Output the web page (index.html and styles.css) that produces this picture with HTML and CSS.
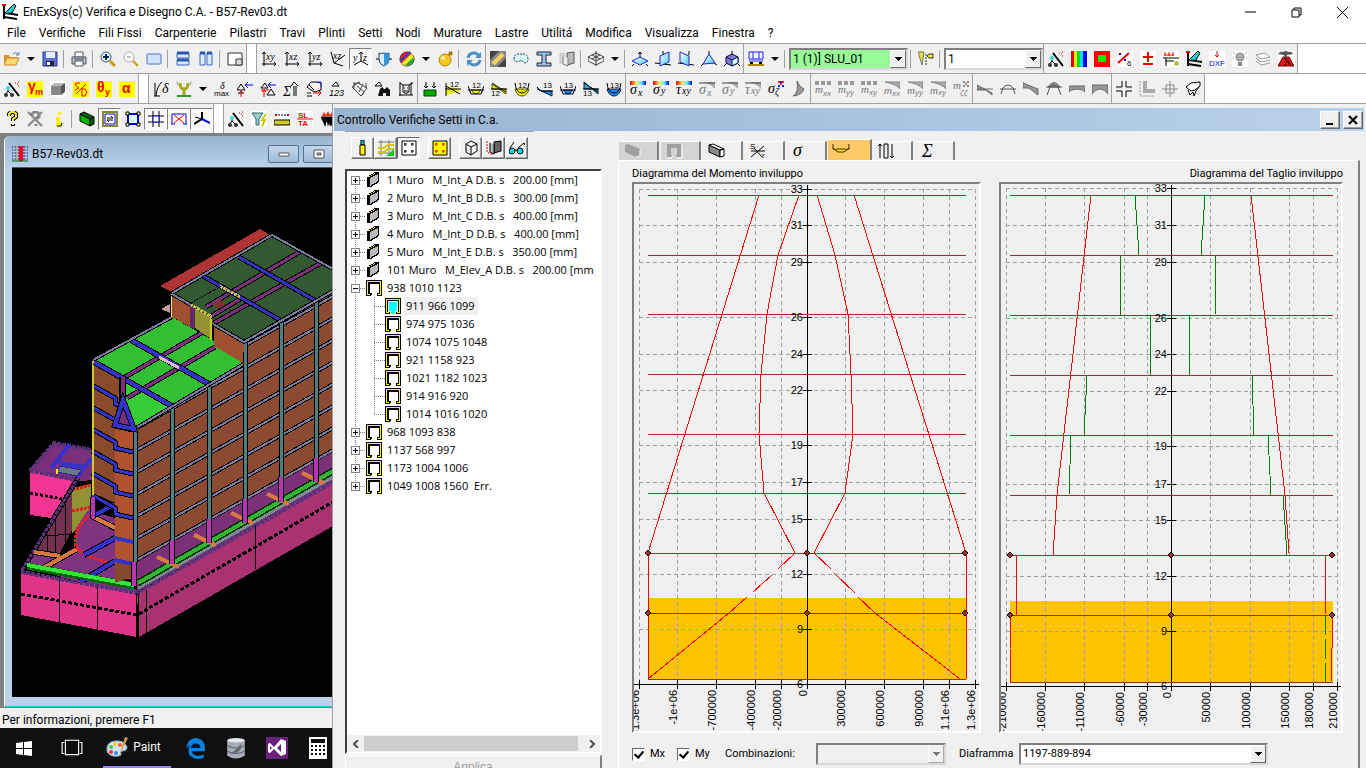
FILE: index.html
```html
<!DOCTYPE html>
<html lang="it">
<head>
    <meta charset="UTF-8">
    <meta name="viewport" content="width=device-width, initial-scale=1.0">
    <title>EnExSys(c) Verifica e Disegno C.A. - B57-Rev03.dt</title>
    <link rel="stylesheet" href="styles.css">
</head>
<body>
    <svg class="paints" aria-hidden="true">
        <defs>
            <linearGradient id="rainbow"><stop offset="0" stop-color="#e00"/><stop offset=".4" stop-color="#ee6"/><stop offset=".7" stop-color="#6ef"/><stop offset="1" stop-color="#00e"/></linearGradient>
            <linearGradient id="glass" x2="1" y2="1"><stop offset="0" stop-color="#fff"/><stop offset="1" stop-color="#4ce"/></linearGradient>
        </defs>
    </svg>
    <svg class="sprite" aria-hidden="true">
        <!-- file / view -->
        <symbol id="open" viewBox="0 0 16 16"><path d="M0 14V4h5l1 2h7v2" fill="#d99a2b"/><path d="M0 14L3 7h12l-3 7z" fill="#ffd876" stroke="#c88a20"/><path d="M9 3q3-3 5 0m1-2v3h-3" fill="none" stroke="#4a7ab0"/></symbol>
        <symbol id="save" viewBox="0 0 16 16"><path d="M1 1h14v14H1z" fill="#5b6fd6" stroke="#2b3a9a"/><path d="M4 1h9v6H4z" fill="#e8ecff"/><path d="M4 10h8v5H4z" fill="#223"/><path d="M5 11h3v3H5z" fill="#fff"/></symbol>
        <symbol id="print" viewBox="0 0 16 16"><path d="M4 1h8v5H4z" fill="#fff" stroke="#555"/><path d="M1 6h14v7H1z" fill="#b8bec8" stroke="#556"/><path d="M4 10h8v5H4z" fill="#fff" stroke="#555"/><path d="M3 8h10" stroke="#445"/></symbol>
        <symbol id="zoomin" viewBox="0 0 16 16"><path d="M10 10l5 5" stroke="#c90" stroke-width="3"/><circle cx="6" cy="6" r="5" fill="#e6f4ff" stroke="#357"/><path d="M3 6h6M6 3v6" stroke="#124" stroke-width="2"/></symbol>
        <symbol id="zoomout" viewBox="0 0 16 16"><path d="M10 10l5 5" stroke="#c90" stroke-width="2"/><circle cx="6" cy="6" r="5" fill="#fff" stroke="#aaa"/><path d="M4 6h4" stroke="#777"/></symbol>
        <symbol id="fit" viewBox="0 0 16 16"><rect x="1" y="3" width="14" height="10" rx="1" fill="#cfe2ff" stroke="#4a78c8"/></symbol>
        <symbol id="tileh" viewBox="0 0 16 16"><path d="M2 2h12v5H2zM2 9h12v5H2z" fill="#dceaff" stroke="#3a68b8"/><path d="M2 2h12M2 9h12" stroke="#2a58b0" stroke-width="3"/></symbol>
        <symbol id="tilev" viewBox="0 0 16 16"><path d="M2 2h5v12H2zM9 2h5v12H9z" fill="#dceaff" stroke="#3a68b8"/><path d="M2 2h5M9 2h5" stroke="#2a58b0" stroke-width="3"/></symbol>
        <symbol id="pip" viewBox="0 0 16 16"><path d="M1 2h14v12H1z" fill="#fff" stroke="#333"/><path d="M9 8h6v6H9z" fill="#ddd" stroke="#333"/></symbol>
        <symbol id="xy" viewBox="0 0 16 16"><path d="M3 15V1M1 3l2-2 2 2M1 13h14l-2-2m2 2l-2 2" class="ln"/><text x="5" y="9" class="ax">xy</text></symbol>
        <symbol id="xz" viewBox="0 0 16 16"><path d="M3 15V1M1 3l2-2 2 2M1 13h14l-2-2m2 2l-2 2" class="ln"/><text x="5" y="9" class="ax">xz</text></symbol>
        <symbol id="yz" viewBox="0 0 16 16"><path d="M3 15V1M1 3l2-2 2 2M1 13h14l-2-2m2 2l-2 2" class="ln"/><text x="5" y="9" class="ax">yz</text></symbol>
        <symbol id="xzr" viewBox="0 0 16 16"><path d="M1 1l3 11 9 3M4 12l11-8" class="ln"/><text x="3" y="8" class="ax">xz</text></symbol>
        <symbol id="iso" viewBox="0 0 16 16"><path d="M8 1v9l-7 4M8 10l7 4M6 3l2-2 2 2" class="ln"/><text x="0" y="10" class="ax">y</text><text x="10" y="10" class="ax">z</text></symbol>
        <symbol id="shield" viewBox="0 0 16 16"><path d="M0 8h16" stroke="#000"/><path d="M8 2q3 1 5 0v7q0 4-5 6-5-2-5-6V2q2 1 5 0z" fill="#def" stroke="#248"/><path d="M8 2q3 1 5 0v7q0 4-5 6z" fill="#39d"/></symbol>
        <symbol id="ball" viewBox="0 0 16 16"><circle cx="8" cy="8" r="7" fill="#e22" stroke="#711"/><path d="M2 13L13 2l2 6-7 7z" fill="#ee2"/><path d="M6 14l9-8-1 6-4 3z" fill="#2a4"/><path d="M1 10L11 1" stroke="#24c" stroke-width="2"/></symbol>
        <symbol id="bomb" viewBox="0 0 16 16"><path d="M10 6l5-5M12 1l3 3" stroke="#a60" stroke-width="2"/><circle cx="8" cy="9" r="6" fill="#f6c820" stroke="#b88a00"/><circle cx="6" cy="7" r="2" fill="#ffefa0"/></symbol>
        <symbol id="refresh" viewBox="0 0 16 16"><path d="M2 7q1-5 6-5 3 0 5 3M14 9q-1 5-6 5-3 0-5-3" fill="none" stroke="#4a90c8" stroke-width="3"/><path d="M15 1v6H9zM1 15V9h6z" fill="#4a90c8"/></symbol>
        <symbol id="brush" viewBox="0 0 16 16"><path d="M0 0h16v16H0z" fill="#888"/><path d="M0 0h9L0 9zM16 7v9H7z" fill="#444"/><path d="M3 13L13 3" stroke="#f7d060" stroke-width="4"/></symbol>
        <symbol id="lasso" viewBox="0 0 16 16"><path d="M1 8q0-5 5-5h5q4 1 4 5 0 4-4 4-1-3-4-2-6 2-6-2z" fill="#d8f8fa" stroke="#246" stroke-dasharray="2 1"/></symbol>
        <symbol id="beam" viewBox="0 0 16 16"><path d="M1 1h14v3h-5v8h5v3H1v-3h5V4H1z" fill="#9cc0ee" stroke="#223"/></symbol>
        <symbol id="stair" viewBox="0 0 16 16"><path d="M8 2l7-1v11l-7 2z" fill="#bbb" stroke="#555"/><path d="M1 3l4-1v9l-4 1z" fill="#ddd" stroke="#999" stroke-dasharray="1 1"/><path d="M4 5v8l5 2V7" fill="#eee" stroke="#777"/></symbol>
        <symbol id="slab" viewBox="0 0 16 16"><path d="M0 6l8-4 8 4-8 4zM0 6v4l8 4 8-4V6M4 4l8 4M12 4L4 8M8 0v15" class="ln thin"/></symbol>
        <symbol id="p1" viewBox="0 0 16 16"><path d="M8 1v6M6 3l2-2 2 2" class="ln"/><path d="M0 10l8-4 8 4-8 4z" fill="url(#glass)" stroke="#22c"/><path d="M0 15l2-2M16 15l-2-2" class="ln"/></symbol>
        <symbol id="p2" viewBox="0 0 16 16"><path d="M0 12l16 2M8 4V0" class="ln"/><path d="M5 5l9-4v10l-9 4z" fill="url(#glass)" stroke="#22c"/></symbol>
        <symbol id="p3" viewBox="0 0 16 16"><path d="M0 12l16 2M11 4V0" class="ln"/><path d="M2 1l9 4v10l-9-4z" fill="url(#glass)" stroke="#22c"/></symbol>
        <symbol id="p4" viewBox="0 0 16 16"><path d="M0 15l3-3M16 14l-3-2M8 0v4" class="ln"/><path d="M8 3l6 9-12 1z" fill="url(#glass)" stroke="#22c"/></symbol>
        <symbol id="p5" viewBox="0 0 16 16"><path d="M0 15l3-3M16 15l-3-3M8 0v4" class="ln"/><path d="M2 6l6-3 6 3v6l-6 3-6-3z" fill="#8078d8" stroke="#114"/><path d="M8 9l6-3v6l-6 3z" fill="#cff" stroke="#114"/><path d="M2 6l6 3" stroke="#114"/></symbol>
        <symbol id="load" viewBox="0 0 16 16"><path d="M1 1h14v7H1zM5 1v7M11 1v7M1 10h14" fill="none" stroke="#22e"/><path d="M2 12h3M11 12h3" stroke="#000" stroke-width="2"/><path d="M0 14h16" stroke="#a80" stroke-width="2"/></symbol>
        <symbol id="cone" viewBox="0 0 16 16"><path d="M0 1h6L4 14z" fill="#eadf30" stroke="#776"/><path d="M8 3v11" stroke="#333" stroke-dasharray="2 1"/><path d="M9 5l2-2h4v4h-4z" fill="#ee3" stroke="#333"/></symbol>
        <!-- analysis -->
        <symbol id="wand" viewBox="0 0 16 16"><path d="M5 2l10 13" stroke="#000" stroke-width="2"/><path d="M11 2h1M14 1h1M14 5h1M13 3h1" stroke="#c00"/><path d="M4 6v4l-3 4M4 10l4 4" class="ln"/><circle cx="4" cy="7" r="2" fill="#3dd"/><circle cx="2" cy="14" r="2" fill="#333"/><circle cx="8" cy="14" r="2" fill="#333"/></symbol>
        <symbol id="bars" viewBox="0 0 16 16"><path d="M0 0h4v16H0z" fill="#e00"/><path d="M3 0h3v16H3z" fill="#ee0"/><path d="M6 0h4v16H6z" fill="#0d2"/><path d="M9 0h4v16H9z" fill="#0df"/><path d="M12 0h4v16h-4z" fill="#00e"/></symbol>
        <symbol id="redbox" viewBox="0 0 16 16"><path d="M0 0h16v16H0z" fill="#f00"/><path d="M4 4h8v7H4z" fill="#0e0"/></symbol>
        <symbol id="pct" viewBox="0 0 16 16"><path d="M0 0h16v16H0z" fill="#fff"/><path d="M1 12L12 2" stroke="#e00" stroke-width="2"/><path d="M2 2h2v2H2zM7 8h2v2H7z" fill="#00e"/><text x="10" y="15" class="ic8">6</text></symbol>
        <symbol id="plusminus" viewBox="0 0 16 16"><path d="M0 0h16v16H0z" fill="#fff"/><path d="M8 1v10M3 6h10M3 13h10" stroke="#e00" stroke-width="2"/></symbol>
        <symbol id="fence" viewBox="0 0 16 16"><path d="M0 0h16v16H0z" fill="#fff"/><path d="M0 7h16M2 10h9M3 7v8" class="ln"/><path d="M2 1v4M6 1v4M10 1v4M1 4h10" stroke="#e00"/><path d="M6 8h2M12 11h3v3h-3z" stroke="#aa0" fill="#8d4"/></symbol>
        <symbol id="pens" viewBox="0 0 16 16"><path d="M2 0v15M2 13l13 2M4 9l12 2" stroke="#000" stroke-width="2"/><path d="M2 10L9 3l3-3 2 2-4 7z" fill="#2cc" stroke="#000"/><path d="M0 1h4" stroke="#e00" stroke-width="2"/></symbol>
        <symbol id="dxf" viewBox="0 0 16 16"><path d="M0 0h16v16H0z" fill="#fff"/><path d="M8 0v6M6 4l2 2 2-2" stroke="#e00" fill="none"/><text x="0" y="15" class="dxf">DXF</text></symbol>
        <symbol id="bulb" viewBox="0 0 16 16"><path d="M0 0h16v16H0z" fill="#fff"/><circle cx="8" cy="6" r="4" fill="#aaa" stroke="#888"/><path d="M6 11h4v4H6z" fill="#888"/><path d="M1 1l2 2M15 1l-2 2M0 7h2M14 7h2" stroke="#bbb"/></symbol>
        <symbol id="layers" viewBox="0 0 16 16"><path d="M1 4l9-2 5 4-9 2zM1 7l5 4 9-2M1 10l5 4 9-2" fill="#fff" stroke="#999"/></symbol>
        <symbol id="volcano" viewBox="0 0 16 16"><path d="M0 0h16v16H0z" fill="#fff"/><path d="M0 15L5 6h6l5 9z" fill="#d11" stroke="#600"/><path d="M0 3q2-3 5-2 3-2 5 0 4-1 5 2l-6 1-1 4-2-4z" fill="#555"/><path d="M7 7l2 3-2 4M10 10l2 4" stroke="#000" fill="none"/></symbol>
        <symbol id="gm" viewBox="0 0 16 16"><path d="M0 0h16v16H0z" fill="#ff0"/><text x="1" y="10" class="red">γ</text><text x="8" y="14" class="red sm">m</text></symbol>
        <symbol id="cube" viewBox="0 0 16 16"><path d="M0 0h16v16H0z" fill="#fff"/><path d="M1 5l4-3h10v9l-4 3H1z" fill="#555"/><path d="M1 5h10v9H1z" fill="#888"/><path d="M1 5l4-3h10l-4 3z" fill="#bbb"/></symbol>
        <symbol id="cd" viewBox="0 0 16 16"><path d="M0 0h16v16H0z" fill="#ff0"/><path d="M3 13L13 3" stroke="#e00"/><path d="M7 2H3L2 4l4 3-4 2" stroke="#e00" fill="none"/><path d="M9 8h3l2 3-2 4H9z" stroke="#e00" fill="none"/></symbol>
        <symbol id="thy" viewBox="0 0 16 16"><path d="M0 0h16v16H0z" fill="#ff0"/><text x="1" y="11" class="red">θ</text><text x="9" y="14" class="red sm">y</text></symbol>
        <symbol id="alpha" viewBox="0 0 16 16"><path d="M0 0h16v16H0z" fill="#ff0"/><text x="3" y="12" class="red">α</text></symbol>
        <symbol id="fd" viewBox="0 0 16 16"><path d="M2 15V2M3 15Q4 5 9 1M1 15h6" class="ln"/><text x="9" y="12" class="gr">δ</text></symbol>
        <symbol id="ypost" viewBox="0 0 16 16"><path d="M1 1l1 4M15 1l-1 4" stroke="#555" stroke-dasharray="1 1"/><path d="M4 2q0 6 4 6t4-6M8 8v6" stroke="#aa2" stroke-width="3" fill="none"/><path d="M1 15h14" stroke="#393" stroke-width="2"/></symbol>
        <symbol id="dmax" viewBox="0 0 16 16"><text x="6" y="8" class="ax">δ</text><text x="0" y="15" class="mx">max</text></symbol>
        <symbol id="tri1" viewBox="0 0 16 16"><path d="M0 9h8L4 3zM1 12h6" class="ln"/><path d="M4 16v-6M2 12l2-2 2 2" stroke="#e00" fill="none"/><path d="M16 4H8m3-3L8 4l3 3" stroke="#00e" fill="none"/></symbol>
        <symbol id="tri2" viewBox="0 0 16 16"><path d="M1 7h7L5 2zM7 14h8l-4-6z" class="ln"/><path d="M4 16V9M2 11l2-2 2 2M1 9h8" stroke="#e00" fill="none"/><path d="M16 4H9m2-3L8 4l3 3" stroke="#00e" fill="none"/></symbol>
        <symbol id="sumup" viewBox="0 0 16 16"><text x="0" y="15" class="gr">Σ</text><path d="M11 15V5M8 5l3-4 4 4M13 5v10" class="ln"/></symbol>
        <symbol id="hand" viewBox="0 0 16 16"><path d="M1 6l4-5h5l5 1v7l-6 2-4-2zM3 4l5 5M1 15h5M1 12h4" class="ln"/><path d="M11 1h4v5" stroke="#22e" fill="none"/><path d="M7 12h8m-3-3l3 3-3 3" stroke="#e00" fill="none"/></symbol>
        <symbol id="n123" viewBox="0 0 16 16"><path d="M3 5h7L7 1z" class="ln"/><text x="0" y="15" class="n9">123</text></symbol>
        <symbol id="rot" viewBox="0 0 16 16"><path d="M2 1v6M8 1L2 3M0 6l6-4 9 5-6 8zM5 5l7 6M11 3l-4 8M14 2v5M9 15l3-3" class="ln thin"/></symbol>
        <symbol id="bino" viewBox="0 0 16 16"><path d="M0 5h7L4 1z" class="ln"/><path d="M5 8l2-2 2 2h1l2-2 3 3v6h-4v-3H8v3H3z" fill="#111"/></symbol>
        <symbol id="clip" viewBox="0 0 16 16"><path d="M2 2l3 2h6l3-2M2 3v12M13 2v12M1 14h14M1 2h2M13 2h2M5 4v7q3 3 6 0V4M6 7h1M9 7h1M6 10h4" class="ln"/></symbol>
        <symbol id="gload" viewBox="0 0 16 16"><path d="M4 1v6M12 1v6M2 5l2 2 2-2M10 5l2 2 2-2" class="ln"/><path d="M2 9h12v6H2z" fill="#0a0" stroke="#040"/></symbol>
        <symbol id="y1" viewBox="0 0 16 16"><path d="M1 5v9l14-4V8z" fill="#ee0"/><path d="M1 2v13M0 8h16M1 5l14 8" class="ln"/><text x="5" y="6" class="mx">12</text></symbol>
        <symbol id="y2" viewBox="0 0 16 16"><path d="M3 9q5 8 10 0z" fill="#ee0" stroke="#550"/><path d="M0 5l3 8h10l3-8M0 9h16" class="ln"/><text x="4" y="7" class="mx">12</text></symbol>
        <symbol id="y3" viewBox="0 0 16 16"><path d="M1 3v5h14v5z" fill="#ee0" stroke="#550"/><path d="M0 8h16M1 2l14 9" class="ln"/><text x="0" y="15" class="mx">12</text></symbol>
        <symbol id="y4" viewBox="0 0 16 16"><path d="M1 8h14q-2 7-7 7t-7-7z" fill="#ee0" stroke="#550"/><path d="M1 2q1 10 7 10t7-10" class="ln"/><text x="4" y="7" class="mx">12</text></symbol>
        <symbol id="b1" viewBox="0 0 16 16"><path d="M0 8l5 2h10v5z" fill="#28e" stroke="#024"/><path d="M0 6l4 4h12" class="ln"/><text x="6" y="7" class="mx">13</text></symbol>
        <symbol id="b2" viewBox="0 0 16 16"><path d="M3 9q5 8 10 0z" fill="#28e" stroke="#024"/><path d="M0 5l3 8h10l3-8M0 9h16" class="ln"/><text x="4" y="7" class="mx">13</text></symbol>
        <symbol id="b3" viewBox="0 0 16 16"><path d="M1 1v7h14v5z" fill="#3ad" stroke="#024"/><path d="M0 8h16M1 2l14 9" class="ln"/><text x="0" y="15" class="mx">13</text></symbol>
        <symbol id="b4" viewBox="0 0 16 16"><path d="M1 8h14q-2 7-7 7t-7-7z" fill="#28e" stroke="#024"/><path d="M1 2q1 10 7 10t7-10" class="ln"/><text x="4" y="7" class="mx">13</text></symbol>
        <symbol id="sx" viewBox="0 0 16 16"><path d="M0 0h16v4H0z" fill="url(#rainbow)"/><text x="0" y="13" class="gr">σ</text><text x="8" y="15" class="ax">x</text></symbol>
        <symbol id="sy" viewBox="0 0 16 16"><path d="M0 0h16v4H0z" fill="url(#rainbow)"/><text x="0" y="13" class="gr">σ</text><text x="8" y="13" class="ax">y</text></symbol>
        <symbol id="txy" viewBox="0 0 16 16"><path d="M0 0h16v4H0z" fill="url(#rainbow)"/><text x="0" y="13" class="gr">τ</text><text x="6" y="13" class="ax">xy</text></symbol>
        <symbol id="gsx" viewBox="0 0 16 16"><path d="M4 1h12v7q-4-5-12-7" fill="#aaa"/><path d="M0 2h16" stroke="#444" stroke-width="1"/><text x="0" y="13" class="gr g">σ</text><text x="8" y="15" class="ax g">x</text></symbol>
        <symbol id="gsy" viewBox="0 0 16 16"><path d="M4 1h12v7q-4-5-12-7" fill="#aaa"/><path d="M0 2h16" stroke="#444" stroke-width="1"/><text x="0" y="13" class="gr g">σ</text><text x="8" y="13" class="ax g">y</text></symbol>
        <symbol id="gtxy" viewBox="0 0 16 16"><path d="M4 1h12v7q-4-5-12-7" fill="#aaa"/><path d="M0 2h16" stroke="#444" stroke-width="1"/><text x="0" y="13" class="gr g">τ</text><text x="6" y="13" class="ax g">xy</text></symbol>
        <symbol id="sz" viewBox="0 0 16 16"><text x="0" y="12" class="gr">σ</text><text x="7" y="14" class="ax">ζ</text><path d="M10 0h2v2h-2zM14 0h2v2h-2zM12 2h2v2h-2z" fill="#e22"/><path d="M10 4h2v2h-2zM14 4h2v2h-2zM12 0h2v2h-2z" fill="#22e"/></symbol>
        <symbol id="sail" viewBox="0 0 16 16"><path d="M6 0q2 6 7 8-2 6-11 7 6-3 4-15z" fill="#999" stroke="#666"/></symbol>
        <symbol id="mxx" viewBox="0 0 16 16"><path d="M0 0h4v4H0zM6 0h4v4H6zM12 0h4v4h-4z" fill="#999"/><text x="0" y="12" class="gm g">m</text><text x="8" y="15" class="mx it g">xx</text></symbol>
        <symbol id="myy" viewBox="0 0 16 16"><path d="M0 0h4v4H0zM6 0h4v4H6zM12 0h4v4h-4z" fill="#999"/><text x="0" y="12" class="gm g">m</text><text x="8" y="14" class="mx it g">yy</text></symbol>
        <symbol id="mxy" viewBox="0 0 16 16"><path d="M0 0h4v4H0zM6 0h4v4H6zM12 0h4v4h-4z" fill="#999"/><text x="0" y="12" class="gm g">m</text><text x="8" y="14" class="mx it g">xy</text></symbol>
        <symbol id="nxx" viewBox="0 0 16 16"><path d="M1 1h15v7q-4-5-15-7" fill="#aaa" stroke="#888"/><text x="0" y="13" class="gm g">m</text><text x="8" y="15" class="mx it g">xx</text></symbol>
        <symbol id="nyy" viewBox="0 0 16 16"><path d="M1 1h15v7q-4-5-15-7" fill="#aaa" stroke="#888"/><text x="0" y="13" class="gm g">m</text><text x="8" y="14" class="mx it g">yy</text></symbol>
        <symbol id="nxy" viewBox="0 0 16 16"><path d="M1 1h15v7q-4-5-15-7" fill="#aaa" stroke="#888"/><text x="0" y="13" class="gm g">m</text><text x="8" y="14" class="mx it g">xy</text></symbol>
        <symbol id="nzz" viewBox="0 0 16 16"><path d="M10 0h2v2h-2zM14 0h2v2h-2zM12 2h2v2h-2zM10 4h2v2h-2zM14 4h2v2h-2z" fill="#888"/><text x="0" y="8" class="gm g">m</text><text x="7" y="14" class="mx it g">ζζ</text></symbol>
        <symbol id="d1" viewBox="0 0 16 16"><path d="M0 4l15 8v2L9 9H0zM0 8h16" class="gf"/></symbol>
        <symbol id="d2" viewBox="0 0 16 16"><path d="M1 13L3 7q5-6 10 0l2 6M0 8h16" fill="none" stroke="#555"/></symbol>
        <symbol id="d3" viewBox="0 0 16 16"><path d="M0 1v6h6l9 7V8L0 2" class="gf"/></symbol>
        <symbol id="d4" viewBox="0 0 16 16"><path d="M2 6q6-9 12 0z" class="gf"/><path d="M0 6h16M1 14L4 6q4-4 8 0l3 8" fill="none" stroke="#555"/></symbol>
        <symbol id="d5" viewBox="0 0 16 16"><path d="M0 5h16v6q-2-3-8-3t-8 3z" class="gf"/></symbol>
        <symbol id="d6" viewBox="0 0 16 16"><path d="M0 4h16v9q-3-5-8-5t-8 5z" class="gf"/></symbol>
        <symbol id="cross" viewBox="0 0 16 16"><path d="M6 0v6H0M10 0v6h6M6 16v-6H0M10 16v-6h6" fill="none" stroke="#000" stroke-width="1"/></symbol>
        <symbol id="ell" viewBox="0 0 16 16"><path d="M4 0h4v8h8v4H4z" fill="#aaa"/><path d="M1 0v15h15" fill="none" stroke="#999" stroke-dasharray="2 1"/></symbol>
        <symbol id="cell" viewBox="0 0 16 16"><path d="M0 8h16M8 0v16M4 4h8v8H4z" fill="none" stroke="#888"/></symbol>
        <symbol id="mitt" viewBox="0 0 16 16"><path d="M1 6l5-4 9-1v4l-5 4-4 1zM3 9l2 5 3-3 1 4 2-5 3-4" fill="#fff" stroke="#000"/></symbol>
        <!-- row 3 -->
        <symbol id="help" viewBox="0 0 16 16"><path d="M5 5V3l2-2h3l2 2v3L9 8v2M9 13v2" fill="none" stroke="#000" stroke-width="4"/><path d="M5 5V3l2-2h3l2 2v3L9 8v2M9 13v1" fill="none" stroke="#fe2" stroke-width="2"/></symbol>
        <symbol id="helpx" viewBox="0 0 16 16"><path d="M5 5V3l2-2h3l2 2v3L9 8v2M9 13v2" fill="none" stroke="#888" stroke-width="3"/><path d="M1 1l14 14M15 1L1 15" stroke="#888" stroke-width="2"/></symbol>
        <symbol id="info" viewBox="0 0 16 16"><path d="M8 1h3v3H8zM6 6h4v5l2 1-1 3H6v-3l1-3H6z" fill="#fe0"/><path d="M7 15h4l1-3" fill="none" stroke="#000"/></symbol>
        <symbol id="wall" viewBox="0 0 16 16"><path d="M1 3l10 5v7L1 10z" fill="#0b0" stroke="#000"/><path d="M1 3l4-2 10 5-4 2zM11 8l4-2v7l-4 2z" fill="#060" stroke="#000"/></symbol>
        <symbol id="frame" viewBox="0 0 16 16"><path d="M1 1h14v14H1z" fill="#fff" stroke="#883" stroke-width="2"/><path d="M3 3h10v10H3z" fill="#fff" stroke="#00d"/><path d="M5 7h6L9 5M11 9H5l2 2" class="ln"/></symbol>
        <symbol id="sel" viewBox="0 0 16 16"><path d="M3 3h10v10H3z" fill="#dff" stroke="#00e" stroke-width="2"/><path d="M1 1h3v3H1zM12 1h3v3h-3zM1 12h3v3H1zM12 12h3v3h-3z" fill="#ffa" stroke="#000"/></symbol>
        <symbol id="hash" viewBox="0 0 16 16"><path d="M0 5h16M0 11h16M5 0v16M11 0v16" stroke="#000"/><path d="M5 5h6v6H5z" fill="#fff" stroke="#00c"/></symbol>
        <symbol id="mesh" viewBox="0 0 16 16"><path d="M1 13V3h14v10M0 13h4M12 13h4" fill="none" stroke="#00e"/><path d="M3 4l10 8M13 4L3 12" stroke="#e00"/></symbol>
        <symbol id="axes" viewBox="0 0 16 16"><path d="M8 1v7L0 13" stroke="#000" stroke-width="2" fill="none"/><path d="M8 8l8 4" stroke="#00d" stroke-width="2"/><path d="M1 6l7 2" stroke="#000"/></symbol>
        <symbol id="cup" viewBox="0 0 16 16"><path d="M0 0h16v16H0z" fill="#fff"/><path d="M1 2h11L8 8v6H5V8z" fill="#9cc" stroke="#366"/><path d="M15 3l-4 6h3l-3 6" stroke="#cc0" fill="none" stroke-width="2"/></symbol>
        <symbol id="ruler" viewBox="0 0 16 16"><path d="M0 0h16v16H0z" fill="#fff"/><path d="M0 9h16v5H0z" fill="#cc2" stroke="#000"/><path d="M1 4h14" stroke="#000" stroke-dasharray="2 1"/><path d="M1 3h2v2H1zM13 3h2v2h-2z" fill="#e00"/></symbol>
        <symbol id="slta" viewBox="0 0 16 16"><path d="M0 0h16v16H0z" fill="#fff"/><text x="1" y="7" class="sl">SL</text><path d="M0 8h16" stroke="#e00"/><text x="1" y="15" class="sl">TA</text></symbol>
        <symbol id="fire" viewBox="0 0 16 16"><path d="M1 6h14l-3 4-1 5M5 15l1-5-5-3M8 9v6" stroke="#000" fill="#000"/><path d="M2 5l2-4 2 3 2-4 2 4 2-3 2 4z" fill="#e30"/></symbol>
        <!-- dialog -->
        <symbol id="pencil" viewBox="0 0 16 16"><path d="M6 0h3v5H6z" fill="#0dd" stroke="#000"/><path d="M5 5h5v10H5z" fill="#fe0" stroke="#000"/></symbol>
        <symbol id="rebar" viewBox="0 0 16 16"><path d="M0 2h16M0 13h16M3 0v16M11 0v12" stroke="#777"/><path d="M0 8h6l4-3h6M0 12h6l4-3h6" fill="none" stroke="#cc0" stroke-width="2"/><path d="M16 9v7H8z" fill="#0c2"/></symbol>
        <symbol id="sect" viewBox="0 0 16 16"><path d="M1 1h14v14H1z" fill="#fff" stroke="#000"/><path d="M3 4h3M4 3v3M10 4h3M11 3v3M3 11h3M4 10v3M10 11h3M11 10v3" stroke="#000"/></symbol>
        <symbol id="secty" viewBox="0 0 16 16"><path d="M1 1h14v14H1z" fill="#ff0" stroke="#000"/><path d="M3 4h3M4 3v3M10 4h3M11 3v3M3 11h3M4 10v3M10 11h3M11 10v3" stroke="#e00"/></symbol>
        <symbol id="box" viewBox="0 0 16 16"><path d="M3 4l5-3 6 3v7l-6 4-5-3zM3 4l5 3 6-3M8 7v8" class="ln"/></symbol>
        <symbol id="core" viewBox="0 0 16 16"><path d="M8 2l7-1v10l-7 2z" fill="#666" stroke="#000"/><path d="M4 3v9l4 2V4" fill="#bbb" stroke="#000"/><path d="M1 1v11l6 3" stroke="#e00" fill="none" stroke-dasharray="2 1"/></symbol>
        <symbol id="specs" viewBox="0 0 16 16"><path d="M1 8L5 2M9 8l6-5 1 2" class="ln"/><circle cx="3" cy="11" r="3" fill="#0dd" stroke="#000"/><circle cx="11" cy="11" r="3" fill="#0dd" stroke="#000"/><path d="M6 10h2" class="ln"/></symbol>
        <symbol id="muro" viewBox="0 0 16 16"><path d="M1 5l8-5h4v10l-8 5H1z" fill="#000"/><path d="M4 6l8-4v7l-8 5z" fill="#bbb"/><path d="M2 5l8-4" stroke="#ee2" stroke-dasharray="2 1"/></symbol>
        <symbol id="setto" viewBox="0 0 16 16"><path d="M0 0h16v16h-5v-2h2V3H3v11h2v2H0z" fill="#000"/><path d="M1 1h14v14h-3v-1h2V2H2v12h2v1H1z" fill="#ff0"/><path d="M3 3h10v11H3z" fill="#fff"/><path d="M5 15V13H3V3h10v10h-2v2" fill="none" stroke="#000"/></symbol>
        <symbol id="settosel" viewBox="0 0 16 16"><path d="M0 0h16v16h-5v-2h2V3H3v11h2v2H0z" fill="#000"/><path d="M1 1h14v14h-3v-1h2V2H2v12h2v1H1z" fill="#ff0"/><path d="M4 4h8v9h-2v3H6v-3H4z" fill="#0ff"/></symbol>
        <symbol id="twall" viewBox="0 0 16 16"><path d="M1 2l11 5v7L1 9z" fill="#888" stroke="#000"/><path d="M1 2l4-1 11 5-4 1zM12 7l4-1v7l-4 1z" fill="#fff" stroke="#000"/></symbol>
        <symbol id="gwall" viewBox="0 0 16 16"><path d="M1 2l3-1 12 5v7l-4 1L1 9z" fill="#a0a0a0"/><path d="M12 14l4-1V7" fill="none" stroke="#fff"/></symbol>
        <symbol id="gsetto" viewBox="0 0 16 16"><path d="M1 1h14v13h-5v-2h1V5H5v7h1v2H1z" fill="#a0a0a0"/><path d="M1 15h5v-2M10 15h6V2" fill="none" stroke="#fff"/></symbol>
        <symbol id="ssr" viewBox="0 0 16 16"><path d="M1 14L14 3M1 8h14M4 5l8 9" class="ln"/><text x="0" y="6" class="ic8">S</text><text x="12" y="15" class="ic8">r</text></symbol>
        <symbol id="sigma" viewBox="0 0 16 16"><text x="1" y="13" class="big">σ</text></symbol>
        <symbol id="moment" viewBox="0 0 16 16"><path d="M3 7h10l-3 3H6z" fill="#ee0"/><path d="M0 2v5l3 1M16 2v5l-3 1M0 6l5 4h6l5-4M3 7h10" fill="none" stroke="#420"/></symbol>
        <symbol id="shear" viewBox="0 0 16 16"><path d="M2 15V1M0 3l2-2 2 2M6 1h4v14H6zM14 1v14M12 13l2 2 2-2" fill="none" stroke="#000"/></symbol>
        <symbol id="sum" viewBox="0 0 16 16"><text x="2" y="14" class="big">Σ</text></symbol>
        <symbol id="dia" viewBox="0 0 8 8"><path d="M4 1l3 3-3 3-3-3z" fill="#a52a2a" stroke="#000"/></symbol>
    </svg>

    <header class="titlebar">
        <svg class="ico"><use href="#pens"/></svg>
        <h1>EnExSys(c) Verifica e Disegno C.A. - B57-Rev03.dt</h1>
        <div class="winbtns">
            <button aria-label="Riduci"><svg viewBox="0 0 11 11"><path d="M0 5h11" class="ln"/></svg></button>
            <button aria-label="Ripristina"><svg viewBox="0 0 11 11"><path d="M1 3h7v7H1zM3 3V1h7v7H8" class="ln"/></svg></button>
            <button aria-label="Chiudi"><svg viewBox="0 0 11 11"><path d="M0 0l11 11M11 0L0 11" class="ln"/></svg></button>
        </div>
    </header>

    <nav class="menu">
        <a href="#">File</a><a href="#">Verifiche</a><a href="#">Fili Fissi</a><a href="#">Carpenterie</a><a href="#">Pilastri</a><a href="#">Travi</a><a href="#">Plinti</a><a href="#">Setti</a><a href="#">Nodi</a><a href="#">Murature</a><a href="#">Lastre</a><a href="#">Utilitá</a><a href="#">Modifica</a><a href="#">Visualizza</a><a href="#">Finestra</a><a href="#">?</a>
    </nav>

    <div class="toolrow">
        <div class="band">
            <button aria-label="Apri"><svg><use href="#open"/></svg></button><button class="drop" aria-label="Recenti"></button>
            <button aria-label="Salva"><svg><use href="#save"/></svg></button><i class="sep"></i>
            <button aria-label="Stampa"><svg><use href="#print"/></svg></button><i class="sep"></i>
            <button aria-label="Zoom più"><svg><use href="#zoomin"/></svg></button>
            <button aria-label="Zoom meno"><svg><use href="#zoomout"/></svg></button>
            <button aria-label="Zoom finestra"><svg><use href="#fit"/></svg></button><i class="sep"></i>
            <button aria-label="Affianca orizzontale"><svg><use href="#tileh"/></svg></button>
            <button aria-label="Affianca verticale"><svg><use href="#tilev"/></svg></button><i class="sep"></i>
            <button aria-label="Riquadro"><svg><use href="#pip"/></svg></button>
        </div>
        <div class="band first">
            <button aria-label="Vista xy"><svg><use href="#xy"/></svg></button>
            <button aria-label="Vista xz"><svg><use href="#xz"/></svg></button>
            <button aria-label="Vista yz"><svg><use href="#yz"/></svg></button>
            <button aria-label="Ruota vista"><svg><use href="#xzr"/></svg></button>
            <button class="on" aria-label="Assonometria"><svg><use href="#iso"/></svg></button>
            <button aria-label="Sezione"><svg><use href="#shield"/></svg></button>
            <button aria-label="Colori"><svg><use href="#ball"/></svg></button><button class="drop" aria-label="Scelta colori"></button>
            <button aria-label="Esplodi"><svg><use href="#bomb"/></svg></button><i class="sep"></i>
            <button aria-label="Aggiorna"><svg><use href="#refresh"/></svg></button>
        </div>
        <div class="band">
            <button aria-label="Pennello"><svg><use href="#brush"/></svg></button>
            <button aria-label="Lazo"><svg><use href="#lasso"/></svg></button>
            <button aria-label="Profilo"><svg><use href="#beam"/></svg></button>
            <button aria-label="Nucleo"><svg><use href="#stair"/></svg></button><i class="sep"></i>
            <button aria-label="Solaio"><svg><use href="#slab"/></svg></button><button class="drop" aria-label="Scelta solaio"></button><i class="sep"></i>
            <button aria-label="Piano xy"><svg><use href="#p1"/></svg></button>
            <button aria-label="Piano xz"><svg><use href="#p2"/></svg></button>
            <button aria-label="Piano yz"><svg><use href="#p3"/></svg></button>
            <button aria-label="Piano 3 punti"><svg><use href="#p4"/></svg></button>
            <button aria-label="Volume"><svg><use href="#p5"/></svg></button>
        </div>
        <div class="band">
            <button aria-label="Carichi"><svg><use href="#load"/></svg></button><button class="drop" aria-label="Scelta carichi"></button><i class="sep"></i>
            <span class="combo green"><select aria-label="Combinazione"><option>1 (1)] SLU_01</option></select></span><i class="sep"></i>
            <button aria-label="Inviluppo"><svg><use href="#cone"/></svg></button><i class="sep"></i>
            <span class="combo num"><select aria-label="Numero"><option>1</option></select></span>
        </div>
        <div class="band">
            <button aria-label="Verifica"><svg><use href="#wand"/></svg></button>
            <button aria-label="Mappa"><svg><use href="#bars"/></svg></button>
            <button aria-label="Sezione piena"><svg><use href="#redbox"/></svg></button>
            <button aria-label="Percentuale"><svg><use href="#pct"/></svg></button>
            <button aria-label="Segno"><svg><use href="#plusminus"/></svg></button>
            <button aria-label="Vincoli"><svg><use href="#fence"/></svg></button>
            <button aria-label="Disegno"><svg><use href="#pens"/></svg></button>
            <button aria-label="DXF"><svg><use href="#dxf"/></svg></button>
            <button aria-label="Luce" disabled><svg><use href="#bulb"/></svg></button>
            <button aria-label="Strati" disabled><svg><use href="#layers"/></svg></button>
            <button aria-label="Esegui"><svg><use href="#volcano"/></svg></button>
        </div>
    </div>

    <div class="toolrow">
        <div class="band">
            <button aria-label="Verifica"><svg><use href="#wand"/></svg></button>
            <button aria-label="Gamma m"><svg><use href="#gm"/></svg></button>
            <button aria-label="Solido"><svg><use href="#cube"/></svg></button>
            <button aria-label="C/D"><svg><use href="#cd"/></svg></button>
            <button aria-label="Theta y"><svg><use href="#thy"/></svg></button>
            <button aria-label="Alfa"><svg><use href="#alpha"/></svg></button>
        </div>
        <div class="band first">
            <button aria-label="Curva delta"><svg><use href="#fd"/></svg></button>
            <button aria-label="Deformata"><svg><use href="#ypost"/></svg></button><button class="drop" aria-label="Scelta deformata"></button>
            <button aria-label="Delta max"><svg><use href="#dmax"/></svg></button>
            <button aria-label="Reazioni"><svg><use href="#tri1"/></svg></button>
            <button aria-label="Reazioni totali"><svg><use href="#tri2"/></svg></button>
            <button aria-label="Somma"><svg><use href="#sumup"/></svg></button>
            <button aria-label="Sposta"><svg><use href="#hand"/></svg></button>
            <button aria-label="Numerazione"><svg><use href="#n123"/></svg></button>
            <button aria-label="Rotazioni"><svg><use href="#rot"/></svg></button>
            <button aria-label="Cerca"><svg><use href="#bino"/></svg></button>
            <button aria-label="Ritaglio"><svg><use href="#clip"/></svg></button>
        </div>
        <div class="band">
            <button aria-label="Pressioni"><svg><use href="#gload"/></svg></button>
            <button aria-label="T12"><svg><use href="#y1"/></svg></button>
            <button aria-label="M12"><svg><use href="#y2"/></svg></button>
            <button aria-label="T12 inviluppo"><svg><use href="#y3"/></svg></button>
            <button aria-label="M12 inviluppo"><svg><use href="#y4"/></svg></button>
            <button aria-label="T13"><svg><use href="#b1"/></svg></button>
            <button aria-label="M13"><svg><use href="#b2"/></svg></button>
            <button aria-label="T13 inviluppo"><svg><use href="#b3"/></svg></button>
            <button aria-label="M13 inviluppo"><svg><use href="#b4"/></svg></button>
        </div>
        <div class="band">
            <button aria-label="Sigma x"><svg><use href="#sx"/></svg></button>
            <button aria-label="Sigma y"><svg><use href="#sy"/></svg></button>
            <button aria-label="Tau xy"><svg><use href="#txy"/></svg></button>
            <button aria-label="Sezione sigma x"><svg><use href="#gsx"/></svg></button>
            <button aria-label="Sezione sigma y"><svg><use href="#gsy"/></svg></button>
            <button aria-label="Sezione tau xy"><svg><use href="#gtxy"/></svg></button>
            <button aria-label="Sigma zeta"><svg><use href="#sz"/></svg></button>
            <button aria-label="Diagramma"><svg><use href="#sail"/></svg></button>
        </div>
        <div class="band">
            <button aria-label="mxx"><svg><use href="#mxx"/></svg></button>
            <button aria-label="myy"><svg><use href="#myy"/></svg></button>
            <button aria-label="mxy"><svg><use href="#mxy"/></svg></button>
            <button aria-label="Sezione mxx"><svg><use href="#nxx"/></svg></button>
            <button aria-label="Sezione myy"><svg><use href="#nyy"/></svg></button>
            <button aria-label="Sezione mxy"><svg><use href="#nxy"/></svg></button>
            <button aria-label="m zeta"><svg><use href="#nzz"/></svg></button>
        </div>
        <div class="band">
            <button aria-label="Diagramma 1"><svg><use href="#d1"/></svg></button>
            <button aria-label="Diagramma 2"><svg><use href="#d2"/></svg></button>
            <button aria-label="Diagramma 3"><svg><use href="#d3"/></svg></button>
            <button aria-label="Diagramma 4"><svg><use href="#d4"/></svg></button>
            <button aria-label="Diagramma 5"><svg><use href="#d5"/></svg></button>
            <button aria-label="Diagramma 6"><svg><use href="#d6"/></svg></button>
        </div>
        <div class="band">
            <button aria-label="Incrocio"><svg><use href="#cross"/></svg></button>
            <button aria-label="Angolo"><svg><use href="#ell"/></svg></button>
            <button aria-label="Cella"><svg><use href="#cell"/></svg></button>
            <button aria-label="Appunti"><svg><use href="#mitt"/></svg></button>
        </div>
    </div>

    <main class="work">
        <section class="left">
            <div class="toolrow third">
                <div class="band">
                    <button aria-label="Guida"><svg><use href="#help"/></svg></button>
                    <button aria-label="Guida contestuale"><svg><use href="#helpx"/></svg></button>
                    <button aria-label="Informazioni"><svg><use href="#info"/></svg></button><i class="sep"></i>
                    <button aria-label="Muri"><svg><use href="#wall"/></svg></button>
                    <button class="on" aria-label="Cornice"><svg><use href="#frame"/></svg></button>
                    <button aria-label="Selezione"><svg><use href="#sel"/></svg></button>
                    <button class="on" aria-label="Griglia"><svg><use href="#hash"/></svg></button>
                    <button class="on" aria-label="Telaio"><svg><use href="#mesh"/></svg></button>
                    <button class="on" aria-label="Assi"><svg><use href="#axes"/></svg></button>
                </div>
                <div class="band first">
                    <button aria-label="Verifica"><svg><use href="#wand"/></svg></button>
                    <button aria-label="Filtro"><svg><use href="#cup"/></svg></button>
                    <button aria-label="Misura"><svg><use href="#ruler"/></svg></button>
                    <button aria-label="SLTA"><svg><use href="#slta"/></svg></button>
                    <button aria-label="Incendio"><svg><use href="#fire"/></svg></button>
                </div>
            </div>

            <div class="mdi">
                <div class="child">
                    <div class="childbar">
                        <svg class="ico" viewBox="0 0 16 16"><path d="M0 1h16M0 4h16M0 7h16M0 10h16M0 13h16" stroke="#00e" stroke-width="1"/><path d="M2 0v15M14 0v15M5 0v15" stroke="#ee4" stroke-dasharray="2 1"/><path d="M9 0v15" stroke="#f00" stroke-width="4"/><path d="M0 15h16" stroke="#060"/></svg>
                        <h2>B57-Rev03.dt</h2>
                        <button aria-label="Riduci"><svg viewBox="0 0 12 12"><path d="M1 5h10v3H1z" fill="#fff" stroke="#555"/></svg></button>
                        <button aria-label="Ingrandisci"><svg viewBox="0 0 12 12"><path d="M1 2h10v8H1z" fill="#fff" stroke="#555"/><path d="M4 5h4v2H4z" fill="#9bd" stroke="#555"/></svg></button>
                    </div>
                    <!-- 3D model view -->
                    <svg class="model" viewBox="12 168 321 529" preserveAspectRatio="xMinYMin slice">
                        <defs>
                            <clipPath id="side"><path d="M136 429L242 366l2-23 89-53v162L137 562z"/></clipPath>
                            <g id="floor"><path d="M137 428L337 316" stroke="#000" stroke-width="4"/><path d="M137 428L337 316" stroke="#7b7ba0" stroke-width="2"/></g>
                            <g id="lfloor"><path d="M92 385l23 13v6l18 4" class="k5"/><path d="M92 385l23 13v6l18 4" fill="none" stroke="#33c" stroke-width="3"/></g>
                        </defs>
                        <path d="M12 168h321v529H12z" fill="#000"/>
                        <path d="M30 470l24-28 38 8v30l-19 2z" fill="#7b2f7b"/>
                        <path d="M30 470l43 11-22 37-21-3z" fill="#f03592"/>
                        <path d="M30 471l24-28 38 7M30 471l43 8" class="edge"/>
                        <path d="M51 468l19-24M59 463l26 4M77 477l15-19" stroke="#33c" stroke-width="4"/>
                        <path d="M60 466l22 4-5 6-20-4z" fill="#6a7a80" stroke="#22a"/><path d="M57 469v5" stroke="#ee0" stroke-width="2"/>
                        <path d="M30 493l32 6" stroke="#000" stroke-width="3" stroke-dasharray="3 2"/>
                        <path d="M72 488l19-4v33l-19 16z" fill="#929232"/>
                        <path d="M72 490l19-5M72 511l19-4" stroke="#d22" stroke-width="3" stroke-dasharray="3 1"/>
                        <path d="M36 553l36-65v42l-12 23z" fill="#74304f"/><path d="M47 536v16M55 520v32M65 504v42M46 536l24-2" stroke="#000"/>
                        <path d="M25 566l11-14 24 3 16-8v-19l12-18 27 8v62l22 10-2 9z" fill="#803380"/>
                        <path d="M137 562L333 452v30L137 592z" fill="#7b3078"/>
                        <path d="M22 570L78 478" stroke="#000" stroke-width="5"/><path d="M22 570L78 478" stroke="#59307a" stroke-width="3" stroke-dasharray="4 1"/>
                        <path d="M34 552l26 4M45 567l32-18M92 516l23 12" stroke="#000" stroke-width="6"/><path d="M34 552l26 4M45 567l32-18M92 516l23 12" stroke="#d87840" stroke-width="4"/>
                        <path d="M89 516q-14 10-14 28 2 10 32 18" fill="none" stroke="#e22" stroke-width="3" stroke-dasharray="3 1"/>
                        <path d="M93 516l22-12M84 555l31-17M80 582l35-21" stroke="#000" stroke-width="6"/><path d="M93 516l22-12M84 555l31-17M80 582l35-21" stroke="#33c" stroke-width="4"/>
                        <path d="M21 572l116 21v44L21 615z" fill="#e0348a"/>
                        <path d="M137 593l196-113v46L139 637z" fill="#a83370"/>
                        <path d="M21 572l116 21L333 482" class="edge"/>
                        <path d="M21 594l116 21 196-113" fill="none" stroke="#000" stroke-width="3" stroke-dasharray="4 2"/>
                        <path d="M59 580v42M97 587v42M138 593v44M146 590v43M255 525v44" stroke="#000"/><path d="M136 593v44" stroke="#000"/>
                        <path d="M27 566l107 20" stroke="#060" stroke-width="7"/><path d="M27 565l107 20" stroke="#35e535" stroke-width="4"/>
                        <path d="M138 588L333 477" stroke="#7a9090" stroke-width="3"/>
                        <path d="M138 583L333 471" stroke="#030" stroke-width="7"/><path d="M138 583L333 471" stroke="#33b533" stroke-width="4"/>
                        <path d="M157 557l22 10M194 535l22 10M231 513l22 10M267 494l22 10M302 473l22 10" stroke="#d87840" stroke-width="4"/>
                        <path d="M93 362l30 17v22l12 28v151l-20-3v-74l-22-10z" fill="#8a4a2c"/>
                        <path d="M115 420l19 8v152l-19-4z" fill="#b0522f"/>
                        <path d="M115 563l22-2v14l-22 8z" fill="#84482e"/>
                        <use href="#lfloor"/><use href="#lfloor" y="22"/><use href="#lfloor" y="44"/><use href="#lfloor" y="66"/><use href="#lfloor" y="88"/><use href="#lfloor" y="110"/>
                        <path d="M115 538l18 4M115 560l18 4" stroke="#33c" stroke-width="4"/>
                        <path d="M93 361v134" stroke="#cc3" stroke-width="2"/>
                        <path d="M136 429L242 366l2-23 89-53v162L137 562z" fill="#8c4a33"/>
                        <g clip-path="url(#side)">
                            <use href="#floor" y="-44"/><use href="#floor" y="-22"/><use href="#floor"/><use href="#floor" y="22"/><use href="#floor" y="44"/><use href="#floor" y="66"/><use href="#floor" y="88"/><use href="#floor" y="110"/><use href="#floor" y="132"/>
                        </g>
                        <path d="M135 430v132M172 408v134M209 386v134M245 343v156M281 322v158M316 302v156" stroke="#000" stroke-width="5"/>
                        <path d="M135 430v132M172 408v134M209 386v134M245 343v156M281 322v158M316 302v156" stroke="#4f8080" stroke-width="3"/>
                        <path d="M134 562v24M172 540v24M209 519v24M245 499v24M281 477v25M316 458v24M93 497v21" stroke="#000" stroke-width="6"/>
                        <path d="M134 562v24M172 540v24M209 519v24M245 499v24M281 477v25M316 458v24M93 497v21" stroke="#b535b5" stroke-width="4"/>
                        <path d="M93 361l79-44 42 24 28 22-70 43z" fill="#33bf33"/>
                        <path d="M125 379v20l11 29 36-22z" fill="#35cc35"/>
                        <path d="M125 377l80-46M127 398l88-51" stroke="#000" stroke-width="5"/><path d="M125 377l80-46M127 398l88-51" stroke="#7b307b" stroke-width="3"/>
                        <path d="M94 362l78 44M131 340l78 44" stroke="#000" stroke-width="6"/><path d="M94 362l78 44M131 340l78 44" stroke="#33c" stroke-width="4"/>
                        <path d="M159 357l20 11" stroke="#dbc" stroke-width="3"/>
                        <path d="M122 377v24" stroke="#000" stroke-width="7"/><path d="M123 377v24" stroke="#7b307b" stroke-width="4"/>
                        <path d="M93 360l79-43M136 428L242 365" stroke="#000" stroke-width="4"/><path d="M93 360l79-43M136 428L242 365" stroke="#7b7ba0" stroke-width="2"/>
                        <path d="M123 400l-8 25 19 4z" fill="#7b307b" stroke="#000" stroke-width="6"/><path d="M123 400l-8 25 19 4z" fill="none" stroke="#33c" stroke-width="4"/>
                        <path d="M160 286l100-57 10 6-98 57z" fill="#b03434"/>
                        <path d="M161 309l9-5v9z" fill="#c09a9a"/>
                        <path d="M172 294l22 13v22l-22-12z" fill="#a05030"/><path d="M171 294v23" stroke="#ee3"/>
                        <path d="M214 324l30 18-1 21-29-17z" fill="#a05030"/>
                        <path d="M172 293l100-58 61 34v22l-89 51-31-18z" fill="#335933"/>
                        <path d="M192 306v22" stroke="#602a60" stroke-width="5"/>
                        <path d="M195 309l16 9v21l-16-11z" fill="#939333"/><path d="M211 318v22" stroke="#cc2" stroke-width="2"/>
                        <path d="M301 251l-95 56M321 263l-107 60M240 299l-30 18" stroke="#000" stroke-width="5"/><path d="M301 251l-95 56M321 263l-107 60M240 299l-30 18" stroke="#7b307b" stroke-width="3"/>
                        <path d="M239 257l77 44M203 276l77 44" stroke="#000" stroke-width="5"/><path d="M239 257l77 44M203 276l77 44" stroke="#33b" stroke-width="3"/>
                        <path d="M220 286l20 11M190 304l22 13" stroke="#cb4" stroke-width="3" stroke-dasharray="3 1"/>
                        <path d="M212 304l8-4 6 4-8 5z" fill="#803434"/><path d="M191 303l32-18" stroke="#000" stroke-dasharray="2 1"/>
                        <path d="M172 293l100-58 61 34M333 291l-89 51-31-18M172 294l19 11" fill="none" stroke="#000" stroke-width="4"/>
                        <path d="M172 293l100-58 61 34M333 291l-89 51-31-18M172 294l19 11" fill="none" stroke="#7b7ba0" stroke-width="2"/>
                    </svg>
                </div>
            </div>

            <div class="status">Per informazioni, premere F1</div>

            <footer class="taskbar">
                <button class="w48" aria-label="Start"><svg viewBox="0 0 16 16"><path d="M0 3l7-1v6H0zM8 2l8-1v7H8zM0 9h7v6l-7-1zM8 9h8v7l-8-1z" fill="#fff"/></svg></button>
                <button class="w48" aria-label="Visualizzazione attività"><svg class="wide" viewBox="0 0 20 16"><path d="M4 1h12v13H4zM3 3H1v10h2M17 3h2v10h-2" fill="none" stroke="#fff"/></svg></button>
                <button class="paint"><svg class="wide" viewBox="0 0 22 22"><path d="M1 15Q0 6 9 5t12 6q0 4-5 4-2 1-1 4-3 2-8 1-5-1-6-5z" fill="#cfe6f2" stroke="#8ab"/><circle cx="5" cy="11" r="2" fill="#5b5"/><circle cx="9" cy="8" r="2" fill="#fc2"/><circle cx="14" cy="9" r="2" fill="#e62"/><circle cx="5" cy="16" r="2" fill="#e33"/><circle cx="10" cy="17" r="2" fill="#38e"/><path d="M13 21l4-14 2-6 3 1-3 6z" fill="#d9974a"/></svg>Paint</button>
                <button aria-label="Edge"><svg class="wide" viewBox="0 0 20 20"><path d="M6 10h9q0-4-5-4-5 0-8 5Q3 1 11 1q8 1 8 9v3H7q1 4 6 4 3 0 5-1v3q-3 1-6 1-8-1-8-8 0-6 6-7-3 2-4 5z" fill="#0d7fdd"/></svg></button>
                <button aria-label="Database"><svg class="wide" viewBox="0 0 20 20"><path d="M2 3v14q8 5 16 0V3z" fill="#a8aeb6"/><ellipse cx="10" cy="3" rx="8" ry="2" fill="#e6e8ec"/><path d="M2 8q8 4 16 0M2 13q8 4 16 0" fill="none" stroke="#667"/><path d="M5 16L15 6l-1 6-5 3z" fill="#667"/></svg></button>
                <button aria-label="Visual Studio"><svg class="wide" viewBox="0 0 22 22"><path d="M0 0h22v22H0z" fill="#68217a"/><path d="M2 7l2-1 4 4 7-8 5 2v13l-5 2-7-7-4 4-2-1zM15 7l-4 4 4 4zM4 9v4l2-2z" fill="#fff" fill-rule="evenodd"/></svg></button>
                <button aria-label="Calcolatrice"><svg class="wide" viewBox="0 0 18 22"><path d="M0 0h18v22H0z" fill="#fff"/><path d="M2 2h14v4H2z" fill="#111"/><path d="M2 9h14M2 13h14M2 17h14" stroke="#111" stroke-width="2" stroke-dasharray="2 2"/></svg></button>
            </footer>
        </section>

        <section class="dialog">
            <div class="dlgbar">
                <h2>Controllo Verifiche Setti in C.a.</h2>
                <button aria-label="Riduci"><svg viewBox="0 0 12 12"><path d="M2 10h7" stroke="#000" stroke-width="2"/></svg></button>
                <button aria-label="Chiudi"><svg viewBox="0 0 12 12"><path d="M2 2l8 8M10 2l-8 8" stroke="#000" stroke-width="2"/></svg></button>
            </div>
            <div class="dlgbody">
                <div class="side">
                    <div class="dlgtools">
                        <button aria-label="Evidenzia"><svg><use href="#pencil"/></svg></button>
                        <button aria-label="Armature"><svg><use href="#rebar"/></svg></button>
                        <button class="on" aria-label="Sezione"><svg><use href="#sect"/></svg></button>
                        <button class="gap" aria-label="Sezione armata"><svg><use href="#secty"/></svg></button>
                        <button class="gap" aria-label="Solido"><svg><use href="#box"/></svg></button>
                        <button aria-label="Nucleo"><svg><use href="#core"/></svg></button>
                        <button aria-label="Mostra"><svg><use href="#specs"/></svg></button>
                    </div>
                    <div class="treebox">
                        <ul class="tree">
                            <li><button class="exp plus" aria-label="Espandi"></button><i></i><svg><use href="#muro"/></svg><span>1 Muro   M_Int_A D.B. s   200.00 [mm]</span></li>
                            <li><button class="exp plus" aria-label="Espandi"></button><i></i><svg><use href="#muro"/></svg><span>2 Muro   M_Int_B D.B. s   300.00 [mm]</span></li>
                            <li><button class="exp plus" aria-label="Espandi"></button><i></i><svg><use href="#muro"/></svg><span>3 Muro   M_Int_C D.B. s   400.00 [mm]</span></li>
                            <li><button class="exp plus" aria-label="Espandi"></button><i></i><svg><use href="#muro"/></svg><span>4 Muro   M_Int_D D.B. s   400.00 [mm]</span></li>
                            <li><button class="exp plus" aria-label="Espandi"></button><i></i><svg><use href="#muro"/></svg><span>5 Muro   M_Int_E D.B. s   350.00 [mm]</span></li>
                            <li><button class="exp plus" aria-label="Espandi"></button><i></i><svg><use href="#muro"/></svg><span>101 Muro   M_Elev_A D.B. s   200.00 [mm</span></li>
                            <li><button class="exp" aria-label="Comprimi"></button><i></i><svg><use href="#setto"/></svg><span>938 1010 1123</span></li>
                            <li class="nest">
                                <ul>
                                    <li><i></i><svg><use href="#settosel"/></svg><span class="sel">911 966 1099</span></li>
                                    <li><i></i><svg><use href="#setto"/></svg><span>974 975 1036</span></li>
                                    <li><i></i><svg><use href="#setto"/></svg><span>1074 1075 1048</span></li>
                                    <li><i></i><svg><use href="#setto"/></svg><span>921 1158 923</span></li>
                                    <li><i></i><svg><use href="#setto"/></svg><span>1021 1182 1023</span></li>
                                    <li><i></i><svg><use href="#setto"/></svg><span>914 916 920</span></li>
                                    <li><i></i><svg><use href="#setto"/></svg><span>1014 1016 1020</span></li>
                                </ul>
                            </li>
                            <li><button class="exp plus" aria-label="Espandi"></button><i></i><svg><use href="#setto"/></svg><span>968 1093 838</span></li>
                            <li><button class="exp plus" aria-label="Espandi"></button><i></i><svg><use href="#setto"/></svg><span>1137 568 997</span></li>
                            <li><button class="exp plus" aria-label="Espandi"></button><i></i><svg><use href="#setto"/></svg><span>1173 1004 1006</span></li>
                            <li><button class="exp plus" aria-label="Espandi"></button><i></i><svg><use href="#setto"/></svg><span>1049 1008 1560  Err.</span></li>
                        </ul>
                        <div class="hscroll">
                            <button aria-label="Sinistra"><svg viewBox="0 0 8 8"><path d="M6 0L2 4l4 4" fill="none" stroke="#505050" stroke-width="2"/></svg></button>
                            <div class="thumb"></div>
                            <button aria-label="Destra"><svg viewBox="0 0 8 8"><path d="M2 0l4 4-4 4" fill="none" stroke="#505050" stroke-width="2"/></svg></button>
                        </div>
                    </div>
                    <button class="apply" disabled>Applica</button>
                </div>

                <div class="panel">
                    <div class="tabs">
                        <button class="off" aria-label="Muri"><svg><use href="#gwall"/></svg></button>
                        <button class="off" aria-label="Setti"><svg><use href="#gsetto"/></svg></button>
                        <button aria-label="Parete"><svg><use href="#twall"/></svg></button>
                        <button aria-label="Sollecitazioni"><svg><use href="#ssr"/></svg></button>
                        <button aria-label="Tensioni"><svg><use href="#sigma"/></svg></button>
                        <button class="cur" aria-label="Momento"><svg><use href="#moment"/></svg></button>
                        <button aria-label="Taglio"><svg><use href="#shear"/></svg></button>
                        <button aria-label="Somma"><svg><use href="#sum"/></svg></button>
                    </div>
                    <div class="page">
                        <div class="charts">
                            <figure>
                                <figcaption>Diagramma del Momento inviluppo</figcaption>
                                <svg class="chart" viewBox="634 184 345 547">
                                    <path d="M648 598h318v81H648z" fill="#ffc400"/>
                                    <path class="grid" d="M639 189v495M677 189v495M716 189v495M755 189v495M781 189v495M845 189v495M884 189v495M923 189v495M949 189v495M975 189v495M639 189h337M639 225h337M639 262h337M639 317h337M639 354h337M639 390h337M639 445h337M639 482h337M639 519h337M639 574h337M639 629h337"/>
                                    <path class="axis" d="M807 185v499M634 684h346M803 189h9M803 225h9M803 262h9M803 317h9M803 354h9M803 390h9M803 445h9M803 482h9M803 519h9M803 574h9M803 629h9M639 680v9M677 680v9M716 680v9M755 680v9M781 680v9M807 680v9M845 680v9M884 680v9M923 680v9M949 680v9M975 680v9"/>
                                    <path class="level" d="M648 195h318M648 255h318M648 314h318M648 374h318M648 434h318M648 493h318M648 553h318M648 613h318M648 679h318"/>
                                    <path class="red" d="M759 195L648 553v126M854 195l112 358v126M799 195l-21 60-11 59-6 60-2 60 5 59 31 60-17 16M772 575l-19 17M747 597l-18 16-81 66M817 195l18 60 13 59 3 60 2 60-8 59-31 60 17 16M834 573l21 20M858 597l17 16 85 66"/>
                                    <use href="#dia" x="644" y="549" width="8" height="8"/><use href="#dia" x="803" y="549" width="8" height="8"/><use href="#dia" x="961" y="549" width="8" height="8"/><use href="#dia" x="644" y="609" width="8" height="8"/><use href="#dia" x="803" y="609" width="8" height="8"/><use href="#dia" x="961" y="609" width="8" height="8"/>
                                    <g class="lab"><text x="803" y="193">33</text><text x="803" y="229">31</text><text x="803" y="266">29</text><text x="803" y="321">26</text><text x="803" y="358">24</text><text x="803" y="394">22</text><text x="803" y="449">19</text><text x="803" y="486">17</text><text x="803" y="523">15</text><text x="803" y="578">12</text><text x="803" y="633">9</text><text x="803" y="688">6</text></g>
                                    <g class="lab">
                                        <text transform="translate(639 690) rotate(-90)">-1.3e+06</text><text transform="translate(677 690) rotate(-90)">-1e+06</text><text transform="translate(716 690) rotate(-90)">-700000</text><text transform="translate(755 690) rotate(-90)">-400000</text><text transform="translate(781 690) rotate(-90)">-200000</text><text transform="translate(807 690) rotate(-90)">0</text><text transform="translate(845 690) rotate(-90)">300000</text><text transform="translate(884 690) rotate(-90)">600000</text><text transform="translate(923 690) rotate(-90)">900000</text><text transform="translate(949 690) rotate(-90)">1.1e+06</text><text transform="translate(975 690) rotate(-90)">1.3e+06</text>
                                    </g>
                                </svg>
                            </figure>
                            <figure class="right">
                                <figcaption>Diagramma del Taglio inviluppo</figcaption>
                                <svg class="chart" viewBox="1001 184 340 547">
                                    <path d="M1010 601h323v81h-323z" fill="#ffc400"/>
                                    <path class="grid" d="M1006 188v498M1045 188v498M1084 188v498M1124 188v498M1147 188v498M1210 188v498M1250 188v498M1289 188v498M1313 188v498M1337 188v498M1006 188h332M1006 225h332M1006 262h332M1006 318h332M1006 354h332M1006 391h332M1006 446h332M1006 484h332M1006 520h332M1006 576h332M1006 631h332"/>
                                    <path class="axis" d="M1171 185v501M1001 686h341M1167 188h9M1167 225h9M1167 262h9M1167 318h9M1167 354h9M1167 391h9M1167 446h9M1167 484h9M1167 520h9M1167 576h9M1167 631h9M1006 682v9M1045 682v9M1084 682v9M1124 682v9M1147 682v9M1171 682v9M1210 682v9M1250 682v9M1289 682v9M1313 682v9M1337 682v9"/>
                                    <path class="level" d="M1010 195h323M1010 255h323M1010 315h323M1010 375h323M1010 435h323M1010 495h323M1010 555h323M1010 615h323M1010 682h323"/>
                                    <path class="green" d="M1135 195l4 60M1205 195l-4 60M1120 255v60M1216 255l-1 60M1150 315v60M1189 315v60M1087 375l-3 60M1252 375l2 60M1071 435l-2 60M1268 435l3 60M1283 495l4 60M1325 615v20M1325 639v20M1325 663v19"/>
                                    <path class="red" d="M1091 195l-34 300-4 60M1251 195l34 300 4 58M1016 555l1 60M1010 615v33l1 34M1326 555l-1 60M1332 615v33l-1 34"/>
                                    <use href="#dia" x="1006" y="551" width="8" height="8"/><use href="#dia" x="1167" y="551" width="8" height="8"/><use href="#dia" x="1328" y="551" width="8" height="8"/><use href="#dia" x="1006" y="611" width="8" height="8"/><use href="#dia" x="1167" y="611" width="8" height="8"/><use href="#dia" x="1328" y="611" width="8" height="8"/>
                                    <g class="lab"><text x="1167" y="192">33</text><text x="1167" y="229">31</text><text x="1167" y="266">29</text><text x="1167" y="322">26</text><text x="1167" y="358">24</text><text x="1167" y="395">22</text><text x="1167" y="450">19</text><text x="1167" y="488">17</text><text x="1167" y="524">15</text><text x="1167" y="580">12</text><text x="1167" y="635">9</text><text x="1167" y="690">6</text></g>
                                    <g class="lab">
                                        <text transform="translate(1006 692) rotate(-90)">-210000</text><text transform="translate(1045 692) rotate(-90)">-160000</text><text transform="translate(1084 692) rotate(-90)">-110000</text><text transform="translate(1124 692) rotate(-90)">-60000</text><text transform="translate(1147 692) rotate(-90)">-30000</text><text transform="translate(1171 692) rotate(-90)">0</text><text transform="translate(1210 692) rotate(-90)">50000</text><text transform="translate(1250 692) rotate(-90)">100000</text><text transform="translate(1289 692) rotate(-90)">150000</text><text transform="translate(1313 692) rotate(-90)">180000</text><text transform="translate(1337 692) rotate(-90)">210000</text>
                                    </g>
                                </svg>
                            </figure>
                        </div>
                        <div class="options">
                            <label><input type="checkbox" checked>Mx</label>
                            <label><input type="checkbox" checked>My</label>
                            <label class="txt" for="comb">Combinazioni:</label>
                            <span class="combo dis"><select id="comb" disabled><option></option></select></span>
                            <label class="txt dia" for="diaf">Diaframma</label>
                            <span class="combo diaf"><select id="diaf"><option>1197-889-894</option></select></span>
                        </div>
                    </div>
                </div>
            </div>
        </section>
    </main>
</body>
</html>
```

FILE: styles.css
```css
* {
    box-sizing: border-box;
}
body {
    margin: 0;
    height: 100vh;
    overflow: hidden;
    display: flex;
    flex-direction: column;
    background: #fff;
    color: #000;
    font: 12px/18px Roboto, "Open Sans", sans-serif;
}
button {
    margin: 0;
    padding: 0;
    border: 0;
    background: none;
    font: inherit;
    color: inherit;
    display: flex;
    align-items: center;
    justify-content: center;
}
h1, h2 {
    margin: 0;
    font-size: 12px;
    font-weight: normal;
    white-space: nowrap;
}
svg {
    flex: none;
}
.sprite {
    display: none;
}
.paints {
    width: 0;
    height: 0;
}
.ico {
    width: 16px;
    height: 16px;
}

/* svg parts */
.ln { fill: none; stroke: #000; }
.thin { stroke: #444; }
.gf { fill: #999; stroke: #666; }
.ax { font: italic 10px "Liberation Serif", serif; }
.gm { font: italic 11px "Liberation Serif", serif; }
.mx { font: 8px "Liberation Sans", sans-serif; }
.n9 { font: italic 9px "Liberation Sans", sans-serif; }
.it { font-style: italic; }
.gr { font: italic 14px "Liberation Serif", serif; }
.big { font: italic 18px "Liberation Serif", serif; }
.ic8 { font: 8px "Liberation Sans", sans-serif; }
.dxf { font: 8px "Liberation Sans", sans-serif; fill: #00c; }
.sl { font: bold 8px "Liberation Sans", sans-serif; fill: #e00; }
.red { font: bold 14px "Liberation Sans", sans-serif; fill: #e00; }
.sm { font-size: 9px; }
.g { fill: #777; }

/* title and menu */
.titlebar {
    display: flex;
    align-items: center;
    height: 24px;
    padding: 0 1px 0 2px;
    gap: 5px;
}
.winbtns {
    margin-left: auto;
    display: flex;
}
.winbtns button {
    width: 46px;
    height: 22px;
}
.winbtns svg {
    width: 11px;
    height: 11px;
}
.menu {
    display: flex;
    height: 19px;
    padding-left: 7px;
    gap: 13px;
}
.menu a {
    color: #000;
    text-decoration: none;
}

/* toolbars */
.toolrow {
    display: flex;
    height: 30px;
    border-top: 1px solid #a0a0a0;
}
.band {
    display: flex;
    align-items: center;
    background: #f0f0f0;
    border-right: 1px solid #a0a0a0;
}
.band.first {
    margin-left: 9px;
    border-left: 1px solid #a0a0a0;
}
.band button {
    width: 23px;
    height: 22px;
    flex: none;
}
.band button svg {
    width: 16px;
    height: 16px;
}
.band button.drop {
    width: 15px;
}
.drop::before {
    content: "";
    border: 4px solid transparent;
    border-top-color: #000;
    border-bottom: 0;
}
.band .on {
    border: 1px solid #808080;
    border-right-color: #fff;
    border-bottom-color: #fff;
    background: #f8f8f8;
}
.sep {
    width: 6px;
    height: 18px;
    background: linear-gradient(#a0a0a0, #a0a0a0) 2px 0 / 1px 100% no-repeat;
}
.combo {
    display: grid;
    grid-template-columns: 1fr 16px;
    height: 22px;
    border: 2px solid;
    border-color: #808080 #d8d8d8 #d8d8d8 #808080;
    background: #fff;
}
.combo select {
    grid-area: 1 / 1 / 2 / 3;
    appearance: none;
    min-width: 0;
    border: 0;
    margin: 0;
    padding: 0 18px 0 2px;
    background: none;
    color: #000;
    font: inherit;
}
.combo::after {
    content: "";
    grid-area: 1 / 2;
    border: 1px solid;
    border-color: #fff #696969 #696969 #fff;
    background: linear-gradient(#000, #000) 4px 6px / 7px 1px no-repeat,
        linear-gradient(#000, #000) 5px 7px / 5px 1px no-repeat,
        linear-gradient(#000, #000) 6px 8px / 3px 1px no-repeat,
        linear-gradient(#000, #000) 7px 9px / 1px 1px no-repeat, #f0f0f0;
    pointer-events: none;
}
.band .combo {
    margin-left: 1px;
}
.green {
    width: 119px;
    background: #98fb98;
}
.num {
    width: 99px;
}

/* workspace */
.work {
    flex: 1;
    min-height: 0;
    display: grid;
    grid-template-columns: 332px 1fr;
}
.left {
    display: flex;
    flex-direction: column;
    min-width: 0;
    min-height: 0;
    overflow: hidden;
}
.third {
    overflow: hidden;
}
.mdi {
    flex: 1;
    min-height: 0;
    padding: 3px 0 1px 4px;
    background: #808080;
    display: flex;
}
.child {
    flex: 1;
    min-width: 0;
    display: flex;
    flex-direction: column;
    padding: 0 0 9px 7px;
    background: #b9d1ea;
    border-left: 1px solid #fff;
    border-bottom: 1px solid #2cc;
    border-radius: 6px 0 0 0;
}
.childbar {
    display: flex;
    align-items: center;
    flex: none;
    height: 31px;
    margin-left: -7px;
    padding: 5px 0 0 7px;
    gap: 4px;
    border-radius: 6px 0 0 0;
    background: linear-gradient(#99b4d1, #b9d1ea);
}
.childbar h2 {
    flex: 1;
}
.childbar button {
    width: 31px;
    height: 18px;
    border: 1px solid #566f8c;
    border-radius: 2px;
    background: linear-gradient(#c4d6ea, #9fbbd9);
}
.childbar button:last-child {
    margin-right: -2px;
}
.childbar button svg {
    width: 12px;
    height: 12px;
}
.model {
    flex: 1;
    min-height: 0;
    width: 100%;
    background: #000;
    border-top: 1px solid #555;
    shape-rendering: crispEdges;
}
.k5 { fill: none; stroke: #000; stroke-width: 5; }
.edge { fill: none; stroke: #59307a; stroke-width: 4; stroke-dasharray: 4 1; }
.status {
    height: 20px;
    padding-left: 2px;
    line-height: 24px;
    background: #f0f0f0;
    overflow: hidden;
}
.taskbar {
    height: 40px;
    display: flex;
    background: #101010;
    color: #fff;
}
.taskbar button {
    width: 41px;
    flex: none;
}
.taskbar button svg {
    width: 16px;
    height: 16px;
}
.taskbar button svg.wide {
    width: 22px;
    height: 22px;
}
.taskbar .w48 {
    width: 48px;
}
.taskbar .paint {
    width: 68px;
    gap: 5px;
    margin: 0 3px 0 7px;
    padding-right: 7px;
    border-bottom: 2px solid #9580ff;
}

/* dialog */
.dialog {
    display: flex;
    flex-direction: column;
    min-width: 0;
    min-height: 0;
    overflow: hidden;
    padding: 4px 2px 0 1px;
    background: #f0f0f0;
    border-left: 1px solid #a0a0a0;
    border-top: 1px solid #a0a0a0;
}
.dlgbar {
    display: flex;
    align-items: center;
    flex: none;
    height: 23px;
    padding: 0 1px 0 3px;
    gap: 3px;
    background: linear-gradient(90deg, #99b4d1, #b9d1ea);
}
.dlgbar h2 {
    flex: 1;
}
.dlgbar button {
    width: 20px;
    height: 18px;
}
.dlgbar button svg {
    width: 12px;
    height: 12px;
}
.dlgbar button, .dlgtools button {
    border: 1px solid;
    border-color: #fff #696969 #696969 #fff;
    background: #f0f0f0;
    box-shadow: inset -1px -1px #a0a0a0;
}
.dlgbody {
    flex: 1;
    min-height: 0;
    display: flex;
    gap: 16px;
    padding-left: 11px;
}
.side {
    width: 257px;
    flex: none;
    display: flex;
    flex-direction: column;
}
.dlgtools {
    display: flex;
    flex: none;
    height: 38px;
    width: 189px;
    padding: 5px 0 0 6px;
    border-top: 1px solid #a0a0a0;
}
.dlgtools button {
    width: 23px;
    height: 22px;
    flex: none;
}
.dlgtools .on {
    border-color: #696969 #fff #fff #696969;
    background: #f8f8f8;
    box-shadow: none;
}
.dlgtools .gap {
    margin-left: 8px;
}
.dlgtools svg {
    width: 16px;
    height: 16px;
}
.treebox {
    height: 585px;
    flex: none;
    display: flex;
    flex-direction: column;
    justify-content: space-between;
    border: 2px solid;
    border-color: #404040 #fff #fff #404040;
    background: #fff;
    overflow: hidden;
}
.tree, .tree ul {
    margin: 0;
    padding: 0;
    list-style: none;
    background: repeating-linear-gradient(#808080 0 1px, transparent 1px 2px) no-repeat;
}
.tree {
    font: 11px/18px "Open Sans", Roboto, sans-serif;
    background-size: 1px calc(100% - 18px);
    background-position: 8px 9px;
}
.tree li {
    display: flex;
    align-items: center;
    height: 18px;
    padding-left: 4px;
}
.tree li.nest {
    height: auto;
    padding-left: 27px;
}
.tree ul {
    background-size: 1px calc(100% - 9px);
}
.tree ul li {
    padding-left: 0;
}
.tree i {
    width: 6px;
    height: 1px;
    flex: none;
    background: repeating-linear-gradient(90deg, #808080 0 1px, transparent 1px 2px);
}
.tree ul i {
    width: 11px;
}
.tree svg {
    width: 16px;
    height: 16px;
    margin-right: 3px;
    shape-rendering: crispEdges;
}
.tree span {
    padding: 0 3px 0 2px;
    white-space: pre;
}
.tree .sel {
    background: #f0f0f0;
}
.exp {
    width: 9px;
    height: 9px;
    flex: none;
    border: 1px solid #808080;
    background: linear-gradient(#000, #000) 1px 3px / 5px 1px no-repeat, #fff;
}
.exp.plus {
    background: linear-gradient(#000, #000) 1px 3px / 5px 1px no-repeat,
        linear-gradient(#000, #000) 3px 1px / 1px 5px no-repeat, #fff;
}
.hscroll {
    display: flex;
    height: 17px;
    flex: none;
    background: #f0f0f0;
}
.hscroll button {
    width: 17px;
}
.hscroll svg {
    width: 8px;
    height: 8px;
}
.thumb {
    flex: 1;
    margin: 1px 5px 1px 0;
    background: #cdcdcd;
}
.apply {
    height: 23px;
    flex: none;
    margin-top: 1px;
    border: 1px solid #fff;
    border-right: 2px solid #808080;
    color: #a0a0a0;
    font: 12px "Liberation Sans", sans-serif;
}
.panel {
    flex: 1;
    display: flex;
    flex-direction: column;
    min-width: 0;
    margin-right: 4px;
    font: 11px/16px Roboto, Arial, sans-serif;
}
.tabs {
    display: flex;
    align-items: flex-end;
    flex: none;
    gap: 2px;
    height: 29px;
    padding-left: 1px;
}
.tabs button {
    width: 40px;
    height: 19px;
    justify-content: flex-start;
    padding-left: 4px;
    border-top: 1px solid #fff;
    border-right: 2px solid #808080;
}
.tabs .off {
    background: #d4d4d4;
}
.tabs .cur {
    width: 44px;
    height: 21px;
    margin: 0 -1px;
    background: #ffc965;
}
.tabs svg {
    width: 18px;
    height: 16px;
}
.page {
    flex: 1;
    border: 1px solid #fff;
    border-right: 2px solid #808080;
    border-bottom: 0;
    padding: 5px 15px 0 13px;
}
.charts {
    display: grid;
    grid-template-columns: 349fr 344fr;
    gap: 18px;
}
figure {
    margin: 0;
}
figcaption {
    height: 16px;
}
.right figcaption {
    text-align: right;
}
.chart {
    display: block;
    width: 100%;
    border: 2px solid;
    border-color: #808080 #fff #fff #808080;
    shape-rendering: crispEdges;
}
.grid { fill: none; stroke: #a0a0a0; stroke-dasharray: 4 3; }
.axis { fill: none; stroke: #000; }
.level { fill: none; stroke: #a52a2a; }
path.red { fill: none; stroke: #f00; }
path.green { fill: none; stroke: #008000; }
.lab { text-anchor: end; font: 11px "Liberation Sans", Arial, sans-serif; }
.options {
    display: flex;
    align-items: center;
    margin-top: 9px;
    height: 24px;
}
.options label {
    display: flex;
    align-items: center;
    gap: 5px;
    width: 45px;
}
.options input {
    appearance: none;
    width: 13px;
    height: 13px;
    margin: 0;
    border: 1px solid;
    border-color: #696969 #fff #fff #696969;
    background: #fff;
    display: grid;
    place-items: center;
}
.options input:checked::after {
    content: "";
    width: 4px;
    height: 7px;
    border: solid #000;
    border-width: 0 2px 2px 0;
    transform: rotate(40deg);
    margin-top: -2px;
}
.options .txt {
    width: 94px;
    padding-left: 3px;
}
.options .dia {
    width: 73px;
    padding-left: 13px;
}
.dis {
    width: 130px;
    background: #f0f0f0;
}
.dis::after {
    opacity: .5;
}
.diaf {
    width: 249px;
}
```
